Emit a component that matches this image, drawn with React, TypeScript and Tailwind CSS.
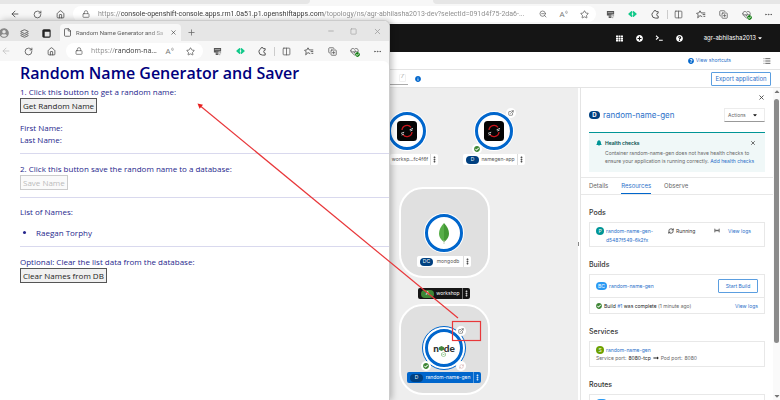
import type { ReactNode } from "react";
import {
  ArrowLeft,
  RotateCw,
  House,
  Lock,
  ZoomOut,
  Star,
  Columns2,
  X,
  Plus,
  Minus,
  Square,
  File,
  Ellipsis,
  EllipsisVertical,
  ExternalLink,
  HeartPulse,
  CopyPlus,
  Layers,
  List,
  RefreshCw,
} from "lucide-react";
import {
  FaBell,
  FaCaretDown,
  FaCheckCircle,
  FaInfoCircle,
  FaLongArrowAltRight,
  FaPlusCircle,
  FaQuestionCircle,
  FaTh,
  FaUserCircle,
} from "react-icons/fa";

const SEGOE = "font-['Open_Sans','Noto_Sans',sans-serif]";
const REDHAT = "font-['Inter','Noto_Sans',sans-serif]";

function Slot({ label, children }: { label: string; children: ReactNode }) {
  return (
    <button aria-label={label} className="flex h-4 min-w-0 flex-1 items-center justify-center">
      {children}
    </button>
  );
}

function NavButtons({ backMuted }: { backMuted?: boolean }) {
  return (
    <div className="flex w-[69px] shrink-0 text-[#444]">
      <Slot label="Back">
        <ArrowLeft size={10} className={backMuted ? "text-[#c4c4c4]" : ""} />
      </Slot>
      <Slot label="Refresh">
        <RotateCw size={9} />
      </Slot>
      <Slot label="Home">
        <House size={9} />
      </Slot>
    </div>
  );
}

function ReadAloud() {
  return (
    <span className="flex items-start text-[8px] leading-[8px] text-[#777]">
      A
      <svg viewBox="0 0 4 6" className="h-[5px] w-[3px]" fill="none" stroke="currentColor" strokeWidth="0.8">
        <path d="M0.5 1.5Q1.5 2.6 0.5 4M2 0.5Q4 2.6 2 5" />
      </svg>
    </span>
  );
}

function BrowserActions() {
  return (
    <>
      <Slot label="Shopping">
        <svg viewBox="0 0 10 10" className="size-[9px]">
          <path d="M1 1h8v4H6v4H3V6H1z" fill="#555" />
          <path d="M2 3h6M4.5 5v3" stroke="#ddd" strokeWidth="0.7" />
          <path d="M7 6.5h2M7 8.5h1" stroke="#777" />
        </svg>
      </Slot>
      <Slot label="Code extension">
        <svg viewBox="0 0 10 9" className="h-2 w-[9px]">
          <path d="M4 1.800 1 4.500 4 7.200V5.800L3 4.500l1-1.300zM6 1.800 9 4.500 6 7.200V5.800l1-1.300-1-1.300z" fill="#12c98a" stroke="#12c98a" strokeWidth="1.400" strokeLinejoin="round" />
        </svg>
      </Slot>
      <Slot label="Extensions">
        <svg viewBox="0 0 10 10" className="size-[9px]" fill="none" stroke="#555" strokeWidth="1.1">
          <path d="M8 3V1.8H5.8A1.3 1.3 0 0 0 3.2 1.8 4 4 0 0 0 1 5.2 4 4 0 0 0 5 9h3V6.8A1.5 1.5 0 1 1 8 3.5z" />
        </svg>
      </Slot>
      <span className="h-[9px] w-px shrink-0 bg-[#ccc]" />
      <Slot label="Split screen">
        <Columns2 size={9} />
      </Slot>
      <Slot label="Favorites">
        <svg viewBox="0 0 12 11" className="h-[9px] w-[10px]" fill="none" stroke="currentColor" strokeWidth="1.1" strokeLinejoin="round">
          <path d="M7.5 8.2 4.8 6.8 2 9.6 2.6 6 .6 4 3.4 3.6 4.8 1 6.2 3.6h5M8 5.6h3.2M9 7.8h2.2" />
        </svg>
      </Slot>
      <Slot label="Collections">
        <CopyPlus size={9} />
      </Slot>
      <Slot label="Browser essentials">
        <span className="relative flex">
          <HeartPulse size={9} />
          <FaCheckCircle size={5} className="absolute -right-px -bottom-px rounded-full bg-white text-[#107c10]" />
        </span>
      </Slot>
      <Slot label="Settings and more">
        <Ellipsis size={9} />
      </Slot>
    </>
  );
}

function BackBrowserBar() {
  return (
    <div className="bg-[#f7f7f7]">
      <div className="flex h-1 justify-between bg-[#f7f7f7]">
        <div className="w-[310px] rounded-br bg-[#e6e6e6]" />
        <div className="w-[347px] rounded-bl bg-[#e6e6e6]" />
      </div>
      <div className="flex h-5 items-center pl-[3px] text-[#555]">
        <NavButtons />
        <div className="ml-px flex h-4 min-w-0 flex-1 items-center rounded-full bg-white pr-px">
          <span className="ml-[9px] flex w-4 shrink-0">
            <Lock size={8} />
          </span>
          <input
            readOnly
            aria-label="Console address"
            defaultValue="https://console-openshift-console.apps.rm1.0a51.p1.openshiftapps.com/topology/ns/agr-abhilasha2013-dev?selectId=091d4f75-2da6-..."
            className="min-w-0 flex-1 bg-[linear-gradient(90deg,#888_23px,#333_23px,#333_226px,#888_226px)] bg-clip-text font-['Roboto',sans-serif] text-[7px] leading-4 text-transparent outline-none"
          />
          <div className="flex w-[63px] shrink-0">
            <Slot label="Zoom out">
              <ZoomOut size={8} />
            </Slot>
            <Slot label="Read page aloud">
              <ReadAloud />
            </Slot>
            <Slot label="Add to favorites">
              <Star size={9} />
            </Slot>
          </div>
        </div>
        <div className="ml-[3px] flex w-[181px] shrink-0 items-center">
          <BrowserActions />
        </div>
      </div>
    </div>
  );
}

function Masthead() {
  return (
    <header className="flex h-7 items-center justify-end bg-[#151515] pr-[17px] text-white">
      <div className="mr-[14px] flex w-[79px] text-[7px]">
        <Slot label="Applications">
          <FaTh />
        </Slot>
        <Slot label="Quick create">
          <FaPlusCircle />
        </Slot>
        <Slot label="Command line terminal">
          <svg viewBox="0 0 10 8" className="h-[6px] w-[8px]" fill="none" stroke="currentColor" strokeWidth="1.4">
            <path d="m1 1 3 2.5L1 6M5 7h5" />
          </svg>
        </Slot>
        <Slot label="Help">
          <FaQuestionCircle />
        </Slot>
      </div>
      <button className="flex w-[60px] items-center justify-end gap-px text-[6px] leading-4">
        agr-abhilasha2013
        <FaCaretDown size={6} />
      </button>
    </header>
  );
}

function Dots({ tone }: { tone: string }) {
  return (
    <button aria-label="More actions" className={`flex h-full w-2 items-center justify-center border-l ${tone}`}>
      <EllipsisVertical size={7} strokeWidth={4} />
    </button>
  );
}

function NodeLabel({ place, tone, badge, badgeTone, dotsTone, text }: { place: string; tone: string; badge?: string; badgeTone?: string; dotsTone: string; text: string }) {
  return (
    <div className={`absolute flex h-[11px] items-center justify-between rounded-[2px] text-[5px] whitespace-nowrap ${place} ${tone}`}>
      {badge && (
        <span className={`ml-[3px] flex h-2 w-[13px] items-center justify-center rounded-full leading-[7px] text-white ${badgeTone}`}>{badge}</span>
      )}
      <span className="flex-1 text-center">{text}</span>
      <Dots tone={dotsTone} />
    </div>
  );
}

function NodeCircle({ place, children }: { place: string; children: ReactNode }) {
  return (
    <div className={`absolute flex size-[38px] items-center justify-center rounded-full border-[3px] border-[#0066cc] bg-white shadow-[0_0_0_1px_white] ${place}`}>
      {children}
    </div>
  );
}

function OpenShiftLogo() {
  return (
    <svg viewBox="0 0 20 20" className="size-5">
      <rect width="20" height="20" rx="3.5" fill="#050505" />
      <g fill="none" strokeWidth="1.3">
        <path d="M5 9A5 5 0 0 1 14 6.4M15 11a5 5 0 0 1-9 2.6" stroke="#c8161d" />
        <path d="m12.6 8.8 3.4-1.4M13.2 10l2.4-1M4 12.4l3.2-1.2M4.6 14 7 13" stroke="#ddd" strokeWidth="0.9" />
      </g>
    </svg>
  );
}

function Decorator({ place, children }: { place: string; children: ReactNode }) {
  return <span className={`absolute flex size-[10px] items-center justify-center rounded-full bg-white ${place}`}>{children}</span>;
}

function Topology() {
  const group = "absolute left-[9px] size-[91px] rounded-[24px] border-2 border-white bg-[#e0e0e0]";
  return (
    <main className="relative min-w-0 flex-1 overflow-hidden bg-[#eeeeee]">
      <NodeCircle place="-left-[2px] top-[24px]">
        <OpenShiftLogo />
      </NodeCircle>
      <NodeLabel place="left-0 top-[66px] w-12" tone="bg-white text-[#555]" dotsTone="border-[#ddd] text-[#222]" text="worksp...fc4f6f" />

      <NodeCircle place="left-[85px] top-[24px]">
        <OpenShiftLogo />
      </NodeCircle>
      <Decorator place="left-[116px] top-[20px]">
        <ExternalLink size={6} color="#333" />
      </Decorator>
      <Decorator place="left-[82px] top-[56px]">
        <FaCheckCircle size={6} color="#3e8635" />
      </Decorator>
      <NodeLabel place="left-[73px] top-[66px] w-[62px]" tone="bg-white text-[#555]" badge="D" badgeTone="bg-[#004080]" dotsTone="border-[#ddd] text-[#222]" text="namegen-app" />

      <div className={`${group} top-[99px]`} />
      <NodeCircle place="left-[35px] top-[126px]">
        <svg viewBox="0 0 12 21" className="h-[21px] w-3">
          <path d="M6 0C3 3.500 1 6.500 1 10.500S3.500 17 6 19z" fill="#57ae47" />
          <path d="M6 0c3 3.500 5 6.500 5 10.500S8.500 17 6 19z" fill="#439934" />
          <path d="M6 17v4" stroke="#b8c4a8" strokeWidth="0.8" />
        </svg>
      </NodeCircle>
      <NodeLabel place="left-[27px] top-[168px] w-[54px]" tone="bg-white text-[#555]" badge="DC" badgeTone="bg-[#004080]" dotsTone="border-[#ddd] text-[#222]" text="mongodb" />

      <NodeLabel place="left-[28px] top-[200px] w-[52px]" tone="bg-[#151515] text-white" badge="A" badgeTone="bg-[#3e8635]" dotsTone="border-[#777] text-white" text="workshop" />

      <div className={`${group} top-[216px]`} />
      <div className="absolute top-[238px] left-[32px] size-[44px] rounded-full border border-[#0066cc] bg-white" />
      <NodeCircle place="left-[35px] top-[241px]">
        <span className="relative flex items-center font-['Lato',sans-serif] text-[10px] leading-[10px] font-black text-[#333]">
          n
          <svg viewBox="0 0 6 6" className="size-[5px]">
            <path d="M3 0 6 1.500v3L3 6 0 4.500v-3z" fill="#43853d" />
          </svg>
          de
          <svg viewBox="0 0 6 6" className="absolute top-[9px] left-2 size-[5px]" fill="none" stroke="#8cc084">
            <path d="M3 .5 5.500 1.800v2.500L3 5.500.5 4.300V1.800zM2 3h2" />
          </svg>
        </span>
      </NodeCircle>
      <Decorator place="left-[66px] top-[238px]">
        <ExternalLink size={6} color="#333" />
      </Decorator>
      <Decorator place="left-[31px] top-[273px]">
        <FaCheckCircle size={6} color="#3e8635" />
      </Decorator>
      <Decorator place="left-[66px] top-[273px]">
        <RefreshCw size={5} color="#c99" />
      </Decorator>
      <NodeLabel place="left-[17px] top-[284px] w-[74px]" tone="bg-[#0066cc] text-white" badge="D" badgeTone="bg-[#004080]" dotsTone="border-[#5b9ee0] text-white" text="random-name-gen" />
    </main>
  );
}

function Card({ title, children }: { title: string; children: ReactNode }) {
  return (
    <section className="mb-3">
      <h2 className="mb-[3px] text-[7px] leading-3 font-medium text-[#333]">{title}</h2>
      <div className="border border-[#e8e8e8]">{children}</div>
    </section>
  );
}

const link = "text-[#2b70c9]";

function SidePanel() {
  return (
    <aside className="w-[192px] shrink-0 overflow-hidden bg-white text-[5px] leading-2 text-[#666]">
      <div className="px-2">
        <div className="flex h-[18px] items-center justify-end">
          <button aria-label="Close panel">
            <X size={7} strokeWidth={3} color="#444" />
          </button>
        </div>
        <div className="flex h-[18px] items-center">
          <span className="mr-[3px] flex h-2 w-[11px] items-center justify-center rounded-full bg-[#004080] text-[6px] font-bold text-white">D</span>
          <h1 className="flex-1 text-[8px] leading-3">
            <a href="#workload" className={link}>random-name-gen</a>
          </h1>
          <button className="flex h-[14px] w-[41px] items-center justify-between border border-b-[#999] border-[#ececec] pr-[6px] pl-[3px]">
            Actions
            <FaCaretDown size={6} color="#151515" />
          </button>
        </div>
        <div className="mt-2 flex h-10 border-t border-[#009596] bg-[#f0f8f8] px-[7px] pt-[6px]">
          <FaBell size={6} color="#009596" className="mt-px mr-[3px] shrink-0" />
          <div className="flex-1 whitespace-nowrap">
            <p className="mb-[2px] font-semibold text-[#004d4d]">Health checks</p>
            <p>Container random-name-gen does not have health checks to</p>
            <p>
              ensure your application is running correctly. <a href="#health" className={link}>Add health checks</a>
            </p>
          </div>
          <button aria-label="Dismiss health checks" className="-ml-2 h-2 w-2">
            <X size={6} strokeWidth={3} color="#444" />
          </button>
        </div>
      </div>
      <nav className="mt-[5px] flex h-[18px] gap-[13px] border-y border-[#e8e8e8] px-2 text-[6px]">
        <a href="#details" className="leading-4">
          Details
        </a>
        <a href="#resources" className={`border-b border-[#0066cc] leading-4 ${link}`}>
          Resources
        </a>
        <a href="#observe" className="leading-4">
          Observe
        </a>
      </nav>
      <div className="px-2 pt-[12px]">
        <Card title="Pods">
          <div className="flex h-[23px] items-start px-[6px] pt-1">
            <span className="mr-[2px] size-2 shrink-0 rounded-full bg-[#009596] text-center text-white">P</span>
            <a href="#pod" className={`w-[62px] leading-[9px] ${link}`}>
              random-name-gen-
              <br />
              d5487f549-6k2fx
            </a>
            <span className="flex flex-1 items-center gap-[2px] text-[#333]">
              <RefreshCw size={6} strokeWidth={3} /> Running
            </span>
            <svg viewBox="0 0 8 6" className="mt-px mr-2 h-[5px] w-[6px]" fill="none" stroke="#222">
              <path d="M1 .5v5M2.500 1.500v3M2 3h4M5.500 1.500v3M7 .5v5" strokeWidth="0.8" />
            </svg>
            <a href="#pod-logs" className={`mr-[7px] ${link}`}>View logs</a>
          </div>
        </Card>
        <Card title="Builds">
          <div className="flex h-[23px] items-center border-b border-[#e8e8e8] px-[6px]">
            <span className="mr-[2px] flex h-2 w-[11px] items-center justify-center rounded-full bg-[#2b9af3] text-white">BC</span>
            <a href="#build-config" className={`flex-1 ${link}`}>random-name-gen</a>
            <button className={`h-[14px] w-10 rounded-[1px] border border-[#5b9ee0] ${link}`}>Start Build</button>
          </div>
          <div className="flex h-[15px] items-center gap-[2px] px-[6px]">
            <FaCheckCircle size={6} color="#3e8635" />
            <span className="flex-1">
              <span className="text-[#222]">
                Build <a href="#build-1" className={link}>#1</a> was complete
              </span>{" "}
              (1 minute ago)
            </span>
            <a href="#build-logs" className={link}>View logs</a>
          </div>
        </Card>
        <Card title="Services">
          <div className="h-6 px-[6px] pt-1">
            <div className="flex items-center gap-[2px]">
              <span className="size-2 rounded-full bg-[#6ca100] text-center text-white">S</span>
              <a href="#service" className={link}>random-name-gen</a>
            </div>
            <p className="flex items-center gap-[2px]">
              Service port: <span className="text-[#222]">8080-tcp</span>
              <FaLongArrowAltRight size={6} color="#222" />
              Pod port: <span>8080</span>
            </p>
          </div>
        </Card>
        <Card title="Routes">
          <div className="h-6 px-[6px] pt-1">
            <div className="h-2 w-[11px] rounded-full bg-[#2b9af3]" />
          </div>
        </Card>
      </div>
    </aside>
  );
}

function ConsoleWindow() {
  return (
    <div className={`flex h-full flex-col bg-white ${REDHAT}`}>
      <div className={SEGOE}>
        <BackBrowserBar />
      </div>
      <Masthead />
      <div className="flex h-[18px] shrink-0 items-center justify-end gap-8 border-b border-[#e4e4e4] pr-[9px] text-[5px]">
        <a href="#shortcuts" className={`flex items-center gap-[2px] ${link}`}>
          <FaQuestionCircle size={6} color="#0066cc" /> View shortcuts
        </a>
        <button aria-label="List view">
          <List size={8} strokeWidth={3} color="#666" />
        </button>
      </div>
      <div className="flex h-[18px] shrink-0 items-center border-b border-[#e4e4e4] pr-[9px] pl-[50%] text-[6px]">
        <label className="flex h-[13px] w-[18px] items-center border-b border-[#aaa]">
          <input aria-label="Find by name" className="w-[9px] min-w-0 outline-none" />
          <kbd className="flex h-2 w-[7px] items-center justify-center rounded-[1px] border border-[#f0f0f0] text-[5px] text-[#888]">/</kbd>
        </label>
        <FaInfoCircle size={6} color="#0066cc" className="ml-[7px]" />
        <button className={`ml-auto h-[14px] w-[60px] rounded-[1px] border border-[#5b9ee0] ${link}`}>Export application</button>
      </div>
      <div className="flex min-h-0 flex-1 pl-[50%]">
        <Topology />
        <div className="flex w-[3px] shrink-0 items-center justify-start border-r border-[#e4e4e4] bg-white">
          <span className="h-1 w-px bg-[#888]" />
        </div>
        <SidePanel />
        <div className="flex w-[7px] shrink-0 flex-col items-center bg-[#fafafa]">
          <FaCaretDown size={8} color="#777" className="rotate-180" />
          <div className="mt-[3px] h-[244px] w-[5px] rounded-full bg-[#8b8b8b]" />
          <FaCaretDown size={8} color="#777" className="mt-auto" />
        </div>
      </div>
    </div>
  );
}

const appButton = "block h-[15px] border border-[#333] bg-[#f0f0f0] px-[2px] text-left leading-3 text-[#222] outline-1 -outline-offset-1 outline-[#555]";

function AppWindow() {
  return (
    <div className={`absolute top-5 bottom-0 left-0 flex w-1/2 flex-col overflow-hidden rounded-tr-md border-t border-r border-[#ccc] bg-[#f7f7f7] shadow-[2px_0_6px_rgba(0,0,0,0.25)] ${SEGOE}`}>
      <div className="flex h-5 shrink-0 items-end bg-[#e6e6e6]">
        <div className="-ml-[7px] flex h-5 w-[64px] items-center pt-1 text-[#444]">
          <Slot label="Profile">
            <FaUserCircle size={10} color="#888" />
          </Slot>
          <Slot label="Workspaces">
            <Layers size={9} />
          </Slot>
          <Slot label="Tab actions">
            <svg viewBox="0 0 10 10" className="size-[9px]">
              <rect x="1" y="1" width="8" height="8" rx="1" fill="none" stroke="#222" strokeWidth="1.2" />
              <path d="M1 2h8M2 1v8" stroke="#222" strokeWidth="2" />
            </svg>
          </Slot>
        </div>
        <div className="ml-[3px] flex h-[17px] w-[121px] items-center gap-1 rounded-t bg-[#f7f7f7] px-[3px]">
          <File size={9} color="#444" className="shrink-0" />
          <span className="flex-1 bg-linear-to-r from-[#555] from-80% to-[#ccc] bg-clip-text font-['Roboto',sans-serif] text-[6px] leading-3 whitespace-nowrap text-transparent">
            Random Name Generator and Sa
          </span>
          <button aria-label="Close tab" className="mr-px">
            <X size={7} color="#333" />
          </button>
        </div>
        <button aria-label="New tab" className="mb-1 ml-[6px]">
          <Plus size={9} color="#666" />
        </button>
        <div className="ml-auto flex h-5 w-[70px] items-center text-[#999]">
          <Slot label="Minimize">
            <Minus size={8} />
          </Slot>
          <Slot label="Maximize">
            <Square size={7} />
          </Slot>
          <Slot label="Close window">
            <X size={9} />
          </Slot>
        </div>
      </div>
      <div className="flex h-5 shrink-0 items-center text-[#555]">
        <div className="-ml-[6px]">
          <NavButtons backMuted />
        </div>
        <div className="ml-[3px] flex h-4 min-w-0 flex-1 items-center rounded-full bg-white pr-[2px]">
          <span className="ml-[9px] flex w-4 shrink-0">
            <Lock size={8} />
          </span>
          <input
            readOnly
            aria-label="App address"
            defaultValue="https://random-na..."
            className="min-w-0 flex-1 bg-[linear-gradient(90deg,#888_24px,#333_24px)] bg-clip-text text-[7px] leading-4 text-transparent outline-none"
          />
          <div className="flex w-[42px] shrink-0">
            <Slot label="Read app page aloud">
              <ReadAloud />
            </Slot>
            <Slot label="Add app to favorites">
              <Star size={9} />
            </Slot>
          </div>
        </div>
        <div className="ml-[3px] flex w-[183px] shrink-0 items-center">
          <BrowserActions />
        </div>
      </div>
      <div className="flex-1 rounded-tr-md bg-white pl-5 text-[8px] leading-3 text-[#26268c]">
        <h1 className="pb-px text-[16px] leading-6 font-semibold text-[#00007d]">Random Name Generator and Saver</h1>
        <p>1. Click this button to get a random name:</p>
        <button className={appButton}>Get Random Name</button>
        <p className="mt-[9px]">First Name:</p>
        <p>Last Name:</p>
        <hr className="mt-[7px] mb-[9px] border-[#d9d9ee]" />
        <p>2. Click this button save the random name to a database:</p>
        <button disabled className="block h-[15px] border border-[#ccc] bg-[#fafafa] px-[2px] leading-3 text-[#bbb]">
          Save Name
        </button>
        <hr className="mt-[7px] mb-2 border-[#d9d9ee]" />
        <p>List of Names:</p>
        <ul className="mt-[9px] list-disc pl-4">
          <li>Raegan Torphy</li>
        </ul>
        <hr className="mt-[7px] mb-[9px] border-[#d9d9ee]" />
        <p>Optional: Clear the list data from the database:</p>
        <button className={appButton}>Clear Names from DB</button>
      </div>
    </div>
  );
}

export default function App() {
  return (
    <div className="relative h-screen overflow-hidden">
      <ConsoleWindow />
      <AppWindow />
      <svg viewBox="0 0 780 400" className="pointer-events-none absolute top-0 left-0 h-[400px] w-[780px]" fill="none" stroke="#e8373a">
        <rect x="452.500" y="321.500" width="28" height="19" strokeWidth="1.200" />
        <path d="M458 318 201 106.500" strokeWidth="1.200" />
        <path d="m197.500 103.500 5.500 1.200-3.400 4z" fill="#e8201f" stroke="none" />
      </svg>
    </div>
  );
}
